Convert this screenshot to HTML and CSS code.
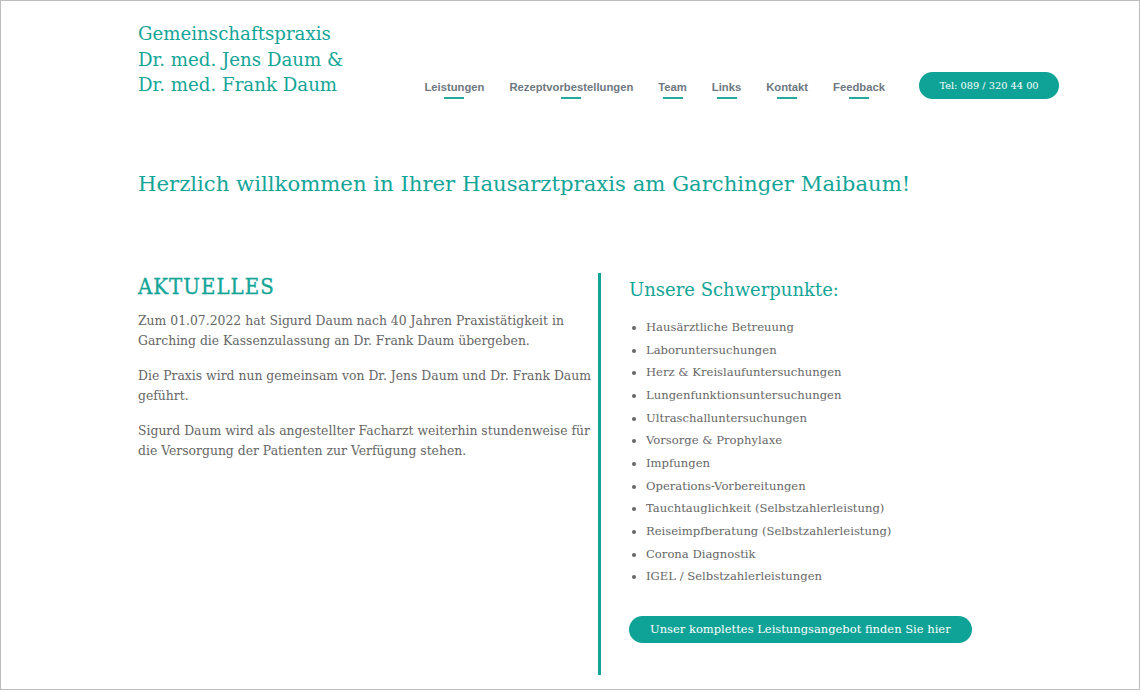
FILE: index.html
```
<!DOCTYPE html>
<html lang="de">
<head>
<meta charset="utf-8">
<title>Gemeinschaftspraxis Dr. med. Jens Daum &amp; Dr. med. Frank Daum</title>
<link rel="stylesheet" href="styles.css">
</head>
<body>
<div class="frame">
  <header class="header">
    <div class="logo">Gemeinschaftspraxis<br>Dr. med. Jens Daum &amp;<br>Dr. med. Frank Daum</div>
    <nav class="nav">
      <a class="nav-item">Leistungen</a>
      <a class="nav-item">Rezeptvorbestellungen</a>
      <a class="nav-item">Team</a>
      <a class="nav-item">Links</a>
      <a class="nav-item">Kontakt</a>
      <a class="nav-item">Feedback</a>
      <a class="tel">Tel: 089 / 320 44 00</a>
    </nav>
  </header>
  <h1 class="welcome">Herzlich willkommen in Ihrer Hausarztpraxis am Garchinger Maibaum!</h1>
  <main class="columns">
    <section class="news">
      <h2 class="news-title">AKTUELLES</h2>
      <p>Zum 01.07.2022 hat Sigurd Daum nach 40 Jahren Praxistätigkeit in Garching die Kassenzulassung an Dr. Frank Daum übergeben.</p>
      <p>Die Praxis wird nun gemeinsam von Dr. Jens Daum und Dr. Frank Daum geführt.</p>
      <p>Sigurd Daum wird als angestellter Facharzt weiterhin stundenweise für die Versorgung der Patienten zur Verfügung stehen.</p>
    </section>
    <section class="focus">
      <h2 class="focus-title">Unsere Schwerpunkte:</h2>
      <ul class="focus-list">
        <li>Hausärztliche Betreuung</li>
        <li>Laboruntersuchungen</li>
        <li>Herz &amp; Kreislaufuntersuchungen</li>
        <li>Lungenfunktionsuntersuchungen</li>
        <li>Ultraschalluntersuchungen</li>
        <li>Vorsorge &amp; Prophylaxe</li>
        <li>Impfungen</li>
        <li>Operations-Vorbereitungen</li>
        <li>Tauchtauglichkeit (Selbstzahlerleistung)</li>
        <li>Reiseimpfberatung (Selbstzahlerleistung)</li>
        <li>Corona Diagnostik</li>
        <li>IGEL / Selbstzahlerleistungen</li>
      </ul>
      <a class="cta">Unser komplettes Leistungsangebot finden Sie hier</a>
    </section>
  </main>
</div>
</body>
</html>
```
FILE: styles.css
```
html, body {
  margin: 0;
  padding: 0;
  height: 100%;
  background: #fff;
}
body {
  font-family: "DejaVu Serif", "Liberation Serif", serif;
  color: #666;
}
.frame {
  box-sizing: border-box;
  height: 690px;
  border: 1px solid #bdbdbd;
  padding: 0 80px 0 137px;
  overflow: hidden;
}
.header {
  display: flex;
  align-items: flex-start;
  justify-content: space-between;
  padding-top: 20px;
}
.logo {
  color: #12a597;
  font-size: 18.2px;
  line-height: 25.5px;
}
.nav {
  display: flex;
  align-items: center;
  margin-top: 52px;
}
.nav-item {
  position: relative;
  font-family: "Liberation Sans", Arial, sans-serif;
  font-weight: bold;
  font-size: 11.25px;
  color: #6e7882;
  margin-right: 25px;
  padding: 8px 0;
}
.nav-item::after {
  content: "";
  position: absolute;
  left: 50%;
  bottom: 2px;
  width: 20px;
  margin-left: -10px;
  height: 2px;
  background: #22ab9d;
}
.tel {
  margin-left: 9px;
  margin-top: -4px;
  background: #0ea396;
  color: #fff;
  font-size: 9.8px;
  height: 27px;
  line-height: 27px;
  width: 140px;
  text-align: center;
  border-radius: 14px;
}
.welcome {
  color: #12a597;
  font-weight: normal;
  font-size: 21.2px;
  margin: 70px 0 0;
}
.columns {
  display: flex;
  margin-top: 77px;
}
.news {
  width: 458px;
  flex: none;
}
.news-title {
  font-family: "DejaVu Serif Condensed", "DejaVu Serif", serif;
  color: #12a597;
  font-weight: normal;
  font-size: 22px;
  line-height: 28px;
  letter-spacing: 1px;
  margin: 0 0 10px;
  -webkit-text-stroke: 0.3px #12a597;
}
.news p {
  font-size: 12.4px;
  line-height: 20px;
  margin: 0 0 15px;
}
.focus {
  border-left: 3px solid #12a597;
  padding: 6px 0 32px 28px;
  margin-left: 2px;
}
.focus-title {
  color: #12a597;
  font-weight: normal;
  font-size: 18px;
  margin: 0 0 16px;
}
.focus-list {
  margin: 0 0 28px;
  padding-left: 17px;
  font-size: 11.6px;
  line-height: 22.65px;
}
.cta {
  display: inline-block;
  background: #0ea396;
  color: #fff;
  font-size: 11.5px;
  height: 27px;
  line-height: 27px;
  padding: 0 21px;
  border-radius: 14px;
}
```
